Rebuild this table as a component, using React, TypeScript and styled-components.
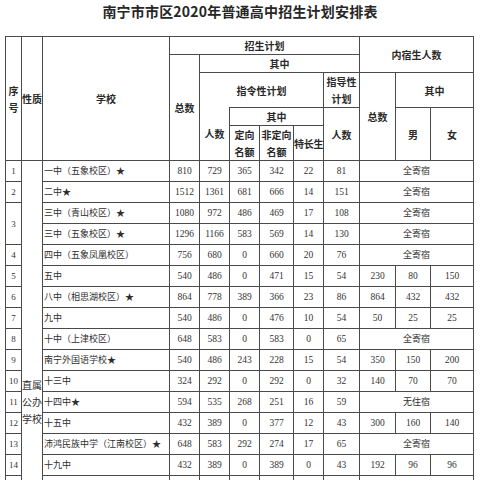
import React from "react";
import styled, { createGlobalStyle, css } from "styled-components";

const GlobalStyle = createGlobalStyle`
  html, body {
    margin: 0;
    padding: 0;
    background: #ffffff;
    overflow: hidden;
  }
  body {
    font-family: "Noto Sans CJK SC", "Liberation Sans", sans-serif;
    color: #222222;
  }
`;

const Page = styled.div`
  width: 480px;
  height: 480px;
  overflow: hidden;
`;

const Title = styled.h1`
  margin: 0 0 12px;
  height: 24px;
  line-height: 22px;
  text-align: center;
  font-size: 14px;
  font-weight: 700;
  letter-spacing: 0.2px;
  color: #262626;
`;

const Table = styled.table`
  margin-left: 5px;
  width: 468px;
  border-collapse: collapse;
  table-layout: fixed;
`;

const HeadRow = styled.tr<{ h: number }>`
  height: ${({ h }) => h}px;
`;

const BodyRow = styled.tr`
  height: 21px;
`;

const Th = styled.th<{ openTop?: boolean; openBottom?: boolean; nowrap?: boolean }>`
  padding: 0;
  border: 1px solid #4a4a4a;
  font-size: 10px;
  font-weight: 700;
  line-height: 17px;
  text-align: center;
  vertical-align: middle;
  color: #2a2a2a;
  word-break: break-all;
  ${({ nowrap }) =>
    nowrap &&
    css`
      white-space: nowrap;
      letter-spacing: -0.3px;
    `}
  ${({ openTop }) =>
    openTop &&
    css`
      border-top: none;
    `}
  ${({ openBottom }) =>
    openBottom &&
    css`
      border-bottom: none;
    `}
`;

const Td = styled.td`
  padding: 0;
  border: 1px solid #4a4a4a;
  font-family: "Liberation Serif", "Noto Sans CJK SC", serif;
  font-size: 9.5px;
  line-height: 12px;
  text-align: center;
  vertical-align: middle;
  color: #333333;
  white-space: nowrap;
`;

const NoCell = styled(Td)`
  font-size: 9px;
`;

const KindCell = styled.td`
  padding: 215px 0 0;
  border: 1px solid #4a4a4a;
  font-size: 10px;
  line-height: 17px;
  text-align: center;
  vertical-align: top;
  color: #2e2e2e;
  word-break: break-all;
`;

const NameCell = styled.td`
  padding: 0 0 0 1px;
  border: 1px solid #4a4a4a;
  font-size: 9px;
  line-height: 12px;
  text-align: left;
  vertical-align: middle;
  color: #2e2e2e;
  white-space: nowrap;
  overflow: hidden;
`;

const DormCell = styled.td`
  padding: 0;
  border: 1px solid #4a4a4a;
  font-size: 9px;
  line-height: 12px;
  text-align: center;
  vertical-align: middle;
  color: #2e2e2e;
`;

type Row = {
  no?: string;
  noSpan?: number;
  name: string;
  nums: number[];
  dorm: string | number[];
};

const rows: Row[] = [
  { no: "1", name: "一中（五象校区）★", nums: [810, 729, 365, 342, 22, 81], dorm: "全寄宿" },
  { no: "2", name: "二中★", nums: [1512, 1361, 681, 666, 14, 151], dorm: "全寄宿" },
  { no: "3", noSpan: 2, name: "三中（青山校区）★", nums: [1080, 972, 486, 469, 17, 108], dorm: "全寄宿" },
  { name: "三中（五象校区）★", nums: [1296, 1166, 583, 569, 14, 130], dorm: "全寄宿" },
  { no: "4", name: "四中（五象凤凰校区）", nums: [756, 680, 0, 660, 20, 76], dorm: "全寄宿" },
  { no: "5", name: "五中", nums: [540, 486, 0, 471, 15, 54], dorm: [230, 80, 150] },
  { no: "6", name: "八中（相思湖校区）★", nums: [864, 778, 389, 366, 23, 86], dorm: [864, 432, 432] },
  { no: "7", name: "九中", nums: [540, 486, 0, 476, 10, 54], dorm: [50, 25, 25] },
  { no: "8", name: "十中（上津校区）", nums: [648, 583, 0, 583, 0, 65], dorm: "全寄宿" },
  { no: "9", name: "南宁外国语学校★", nums: [540, 486, 243, 228, 15, 54], dorm: [350, 150, 200] },
  { no: "10", name: "十三中", nums: [324, 292, 0, 292, 0, 32], dorm: [140, 70, 70] },
  { no: "11", name: "十四中★", nums: [594, 535, 268, 251, 16, 59], dorm: "无住宿" },
  { no: "12", name: "十五中", nums: [432, 389, 0, 377, 12, 43], dorm: [300, 160, 140] },
  { no: "13", name: "沛鸿民族中学（江南校区）★", nums: [648, 583, 292, 274, 17, 65], dorm: "全寄宿" },
  { no: "14", name: "十九中", nums: [432, 389, 0, 389, 0, 43], dorm: [192, 96, 96] },
  { no: "15", name: "二十一中", nums: [540, 486, 0, 476, 10, 54], dorm: "全寄宿" },
];

const colWidths = [16, 21, 127, 30, 30, 30, 34, 30, 36, 36, 35, 43];

export default function App() {
  return (
    <Page>
      <GlobalStyle />
      <Title>南宁市市区2020年普通高中招生计划安排表</Title>
      <Table>
        <colgroup>
          {colWidths.map((w, i) => (
            <col key={i} style={{ width: w }} />
          ))}
        </colgroup>
        <thead>
          <HeadRow h={18}>
            <Th rowSpan={5}>序号</Th>
            <Th rowSpan={5}>性质</Th>
            <Th rowSpan={5}>学校</Th>
            <Th colSpan={6}>招生计划</Th>
            <Th colSpan={3} rowSpan={2}>
              内宿生人数
            </Th>
          </HeadRow>
          <HeadRow h={18}>
            <Th rowSpan={4}>总数</Th>
            <Th colSpan={5}>其中</Th>
          </HeadRow>
          <HeadRow h={35}>
            <Th colSpan={4} openBottom>
              指令性计划
            </Th>
            <Th>指导性计划</Th>
            <Th rowSpan={3}>总数</Th>
            <Th colSpan={2}>其中</Th>
          </HeadRow>
          <HeadRow h={17}>
            <Th rowSpan={2} openTop>
              人数
            </Th>
            <Th colSpan={3}>其中</Th>
            <Th rowSpan={2}>人数</Th>
            <Th rowSpan={2}>男</Th>
            <Th rowSpan={2}>女</Th>
          </HeadRow>
          <HeadRow h={34}>
            <Th>定向名额</Th>
            <Th>非定向名额</Th>
            <Th nowrap>特长生</Th>
          </HeadRow>
        </thead>
        <tbody>
          {rows.map((r, i) => (
            <BodyRow key={i}>
              {r.no !== undefined && <NoCell rowSpan={r.noSpan ?? 1}>{r.no}</NoCell>}
              {i === 0 && <KindCell rowSpan={rows.length}>直属公办学校</KindCell>}
              <NameCell>{r.name}</NameCell>
              {r.nums.map((n, j) => (
                <Td key={j}>{n}</Td>
              ))}
              {typeof r.dorm === "string" ? (
                <DormCell colSpan={3}>{r.dorm}</DormCell>
              ) : (
                r.dorm.map((n, j) => <Td key={j}>{n}</Td>)
              )}
            </BodyRow>
          ))}
        </tbody>
      </Table>
    </Page>
  );
}
